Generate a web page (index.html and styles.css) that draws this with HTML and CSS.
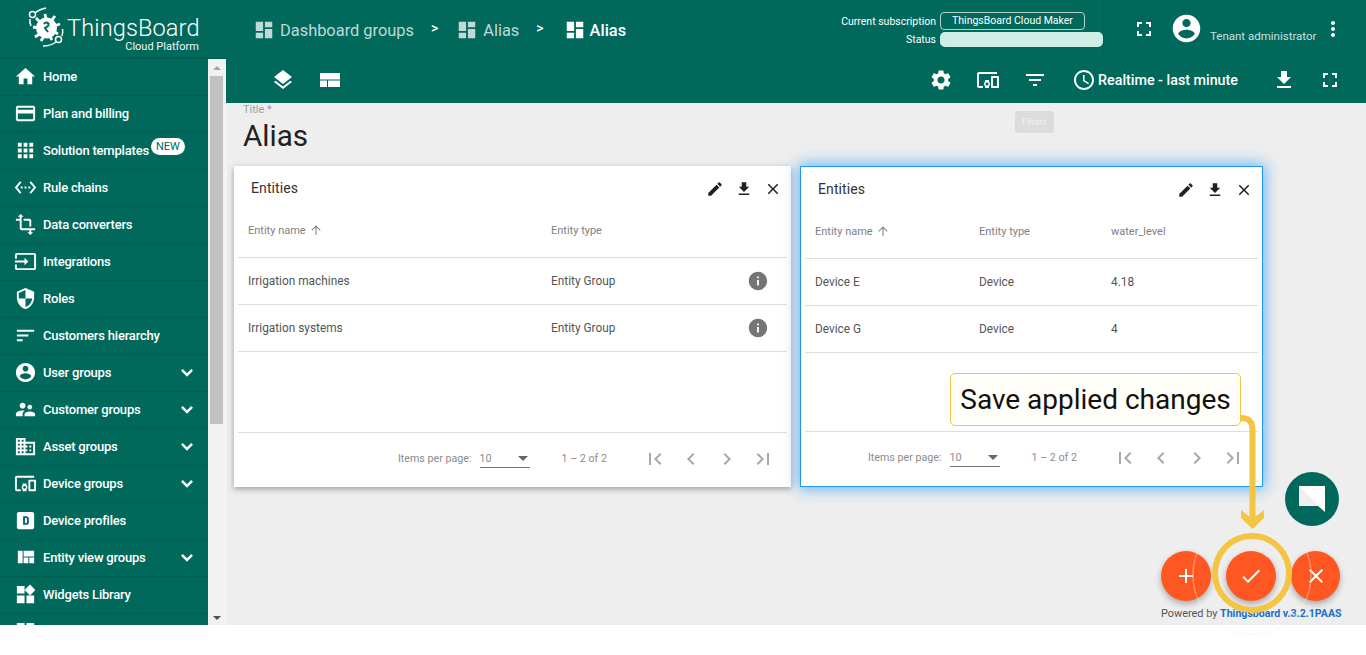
FILE: index.html
```html
<!DOCTYPE html>
<html lang="en">
<head>
<meta charset="utf-8">
<title>ThingsBoard - Alias</title>
<link rel="stylesheet" href="styles.css">
</head>
<body>
<svg class="defs" aria-hidden="true">
  <symbol id="i-home" viewBox="0 0 24 24"><path d="M10 20v-6h4v6h5v-8h3L12 3 2 12h3v8z"/></symbol>
  <symbol id="i-card" viewBox="0 0 24 24"><path d="M20 4H4c-1.11 0-1.99.89-1.99 2L2 18c0 1.11.89 2 2 2h16c1.11 0 2-.89 2-2V6c0-1.11-.89-2-2-2zm0 14H4v-6h16v6zm0-10H4V6h16v2z"/></symbol>
  <symbol id="i-apps" viewBox="0 0 24 24"><path d="M4 8h4V4H4v4zm6 12h4v-4h-4v4zm-6 0h4v-4H4v4zm0-6h4v-4H4v4zm6 0h4v-4h-4v4zm6-10v4h4V4h-4zm-6 4h4V4h-4v4zm6 6h4v-4h-4v4zm0 6h4v-4h-4v4z"/></symbol>
  <symbol id="i-rule" viewBox="0 0 24 24"><path d="M7.77 6.76L6.23 5.48.82 12l5.41 6.52 1.54-1.28L3.42 12l4.35-5.24zM7 13h2v-2H7v2zm10-2h-2v2h2v-2zm-6 2h2v-2h-2v2zm6.77-7.52l-1.54 1.28L20.58 12l-4.35 5.24 1.54 1.28L23.18 12l-5.41-6.52z"/></symbol>
  <symbol id="i-transform" viewBox="0 0 24 24"><path d="M22 18v-2H8V4h2L7 1 4 4h2v2H2v2h4v8c0 1.1.9 2 2 2h8v2h-2l3 3 3-3h-2v-2h4zM10 8h6v6h2V8c0-1.1-.9-2-2-2h-6v2z"/></symbol>
  <symbol id="i-input" viewBox="0 0 24 24"><path d="M21 3.01H3c-1.1 0-2 .9-2 2V9h2V4.99h18v14.03H3V15H1v4.01c0 1.1.9 1.98 2 1.98h18c1.1 0 2-.88 2-1.98v-14c0-1.11-.9-2-2-2zM11 16l4-4-4-4v3H1v2h10v3z"/></symbol>
  <symbol id="i-security" viewBox="0 0 24 24"><path d="M12 1L3 5v6c0 5.55 3.84 10.74 9 12 5.16-1.26 9-6.45 9-12V5l-9-4zm0 10.99h7c-.53 4.12-3.28 7.79-7 8.94V12H5V6.3l7-3.11v8.8z"/></symbol>
  <symbol id="i-sort" viewBox="0 0 24 24"><path d="M3 18h6v-2H3v2zM3 6v2h18V6H3zm0 7h12v-2H3v2z"/></symbol>
  <symbol id="i-account" viewBox="0 0 24 24"><path d="M12 2C6.48 2 2 6.48 2 12s4.48 10 10 10 10-4.48 10-10S17.52 2 12 2zm0 3c1.66 0 3 1.34 3 3s-1.34 3-3 3-3-1.34-3-3 1.34-3 3-3zm0 14.2c-2.5 0-4.71-1.28-6-3.22.03-1.99 4-3.08 6-3.08 1.99 0 5.97 1.09 6 3.08-1.29 1.94-3.5 3.22-6 3.22z"/></symbol>
  <symbol id="i-people" viewBox="0 0 24 24"><path d="M16.5 12c1.38 0 2.49-1.12 2.49-2.5S17.88 7 16.5 7C15.12 7 14 8.12 14 9.5s1.12 2.5 2.5 2.5zM9 11c1.66 0 2.99-1.34 2.99-3S10.66 5 9 5C7.34 5 6 6.34 6 8s1.34 3 3 3zm7.5 3c-1.83 0-5.5.92-5.5 2.75V19h11v-2.25c0-1.83-3.67-2.75-5.5-2.75zM9 13c-2.33 0-7 1.17-7 3.5V19h7v-2.25c0-.85.33-2.34 2.37-3.47C10.5 13.1 9.66 13 9 13z"/></symbol>
  <symbol id="i-domain" viewBox="0 0 24 24"><path d="M12 7V3H2v18h20V7H10zM6 19H4v-2h2v2zm0-4H4v-2h2v2zm0-4H4V9h2v2zm0-4H4V5h2v2zm4 12H8v-2h2v2zm0-4H8v-2h2v2zm0-4H8V9h2v2zm0-4H8V5h2v2zm10 12h-8v-2h2v-2h-2v-2h2v-2h-2V9h8v10zm-2-8h-2v2h2v-2zm0 4h-2v2h2v-2z"/></symbol>
  <symbol id="i-devices" viewBox="0 0 24 24"><path d="M3 6h18V4H3c-1.1 0-2 .9-2 2v12c0 1.1.9 2 2 2h4v-2H3V6zm10 6H9v1.78c-.61.55-1 1.33-1 2.22s.39 1.67 1 2.22V20h4v-1.78c.61-.55 1-1.34 1-2.22s-.39-1.67-1-2.22V12zm-2 5.5c-.83 0-1.5-.67-1.5-1.5s.67-1.5 1.5-1.5 1.5.67 1.5 1.5-.67 1.5-1.5 1.5zM22 8h-6c-.5 0-1 .5-1 1v10c0 .5.5 1 1 1h6c.5 0 1-.5 1-1V9c0-.5-.5-1-1-1zm-1 10h-4v-8h4v8z"/></symbol>
  <symbol id="i-profile" viewBox="0 0 24 24"><path fill-rule="evenodd" d="M5 3h14c1.1 0 2 .9 2 2v14c0 1.1-.9 2-2 2H5c-1.1 0-2-.9-2-2V5c0-1.1.9-2 2-2zm4.5 4.5v9H13c1.4 0 2.5-1.1 2.5-2.5V10c0-1.4-1.1-2.5-2.5-2.5H9.500zm2 2H13c.3 0 .5.2.5.5v4c0 .3-.2.5-.5.5h-1.500V9.500z"/></symbol>
  <symbol id="i-quilt" viewBox="0 0 24 24"><path d="M10 18h5v-6h-5v6zm-6 0h5V5H4v13zm12 0h5v-6h-5v6zM10 5v6h11V5H10z"/></symbol>
  <symbol id="i-widgets" viewBox="0 0 24 24"><path d="M13 13v8h8v-8h-8zM3 21h8v-8H3v8zM3 3v8h8V3H3zm13.66-1.31L11 7.34 16.66 13l5.66-5.66-5.66-5.65z"/></symbol>
  <symbol id="i-dashboard" viewBox="0 0 24 24"><path d="M3 13h8V3H3v10zm0 8h8v-6H3v6zm10 0h8V11h-8v10zm0-18v6h8V3h-8z"/></symbol>
  <symbol id="i-layers" viewBox="0 0 24 24"><path d="M11.99 18.54l-7.37-5.73L3 14.07l9 7 9-7-1.63-1.27-7.38 5.74zM12 16l7.36-5.73L21 9l-9-7-9 7 1.63 1.27L12 16z"/></symbol>
  <symbol id="i-layout" viewBox="0 0 24 24"><path d="M2 5h20v6.500H2zM2 12.500h7V19H2zM10 12.500h12V19H10z"/></symbol>
  <symbol id="i-settings" viewBox="0 0 24 24"><path d="M19.14 12.94c.04-.3.06-.61.06-.94 0-.32-.02-.64-.07-.94l2.03-1.58c.18-.14.23-.41.12-.61l-1.92-3.32c-.12-.22-.37-.29-.59-.22l-2.39.96c-.5-.38-1.03-.7-1.62-.94l-.36-2.54c-.04-.24-.24-.41-.48-.41h-3.84c-.24 0-.43.17-.47.41l-.36 2.54c-.59.24-1.13.57-1.62.94l-2.39-.96c-.22-.08-.47 0-.59.22L2.74 8.87c-.12.21-.08.47.12.61l2.03 1.58c-.05.3-.09.63-.09.94s.02.64.07.94l-2.03 1.58c-.18.14-.23.41-.12.61l1.92 3.32c.12.22.37.29.59.22l2.39-.96c.5.38 1.03.7 1.62.94l.36 2.54c.05.24.24.41.48.41h3.84c.24 0 .44-.17.47-.41l.36-2.54c.59-.24 1.13-.56 1.62-.94l2.39.96c.22.08.47 0 .59-.22l1.92-3.32c.12-.22.07-.47-.12-.61l-2.01-1.58zM12 15.600c-1.98 0-3.6-1.62-3.6-3.6s1.62-3.6 3.6-3.6 3.6 1.62 3.6 3.6-1.62 3.6-3.6 3.6z"/></symbol>
  <symbol id="i-filter" viewBox="0 0 24 24"><path d="M10 18h4v-2h-4v2zM3 6v2h18V6H3zm3 7h12v-2H6v2z"/></symbol>
  <symbol id="i-clock" viewBox="0 0 24 24"><path d="M11.99 2C6.47 2 2 6.48 2 12s4.47 10 9.990 10C17.52 22 22 17.52 22 12S17.52 2 11.99 2zM12 20c-4.420 0-8-3.580-8-8s3.580-8 8-8 8 3.580 8 8-3.580 8-8 8zm.5-13H11v6l5.250 3.150.75-1.230-4.500-2.670z"/></symbol>
  <symbol id="i-download" viewBox="0 0 24 24"><path d="M19 9h-4V3H9v6H5l7 7 7-7zM5 18v2h14v-2H5z"/></symbol>
  <symbol id="i-fullscreen" viewBox="0 0 24 24"><path d="M7 14H5v5h5v-2H7v-3zm-2-4h2V7h3V5H5v5zm12 7h-3v2h5v-5h-2v3zM14 5v2h3v3h2V5h-5z"/></symbol>
  <symbol id="i-more" viewBox="0 0 24 24"><path d="M12 8c1.100 0 2-.9 2-2s-.9-2-2-2-2 .9-2 2 .9 2 2 2zm0 2c-1.100 0-2 .9-2 2s.9 2 2 2 2-.9 2-2-.9-2-2-2zm0 6c-1.100 0-2 .9-2 2s.9 2 2 2 2-.9 2-2-.9-2-2-2z"/></symbol>
  <symbol id="i-edit" viewBox="0 0 24 24"><path d="M3 17.250V21h3.750L17.810 9.940l-3.750-3.750L3 17.250zM20.710 7.040c.39-.39.39-1.020 0-1.410l-2.340-2.340c-.39-.39-1.020-.39-1.410 0l-1.830 1.830 3.750 3.750 1.830-1.830z"/></symbol>
  <symbol id="i-close" viewBox="0 0 24 24"><path d="M19 6.410L17.590 5 12 10.590 6.410 5 5 6.410 10.590 12 5 17.590 6.410 19 12 13.410 17.590 19 19 17.590 13.410 12z"/></symbol>
  <symbol id="i-info" viewBox="0 0 24 24"><path d="M12 2C6.480 2 2 6.480 2 12s4.480 10 10 10 10-4.480 10-10S17.520 2 12 2zm1 15h-2v-6h2v6zm0-8h-2V7h2v2z"/></symbol>
  <symbol id="i-up" viewBox="0 0 24 24"><path d="M4 12l1.410 1.410L11 7.830V20h2V7.830l5.580 5.590L20 12l-8-8-8 8z"/></symbol>
  <symbol id="i-first" viewBox="0 0 24 24"><path d="M18.410 16.590L13.820 12l4.590-4.590L17 6l-6 6 6 6zM6 6h2v12H6z"/></symbol>
  <symbol id="i-prev" viewBox="0 0 24 24"><path d="M15.410 7.410L14 6l-6 6 6 6 1.410-1.410L10.830 12z"/></symbol>
  <symbol id="i-next" viewBox="0 0 24 24"><path d="M10 6L8.590 7.410 13.170 12l-4.580 4.590L10 18l6-6z"/></symbol>
  <symbol id="i-last" viewBox="0 0 24 24"><path d="M5.590 7.410L10.180 12l-4.590 4.590L7 18l6-6-6-6zM16 6h2v12h-2z"/></symbol>
  <symbol id="i-add" viewBox="0 0 24 24"><path d="M19 13h-6v6h-2v-6H5v-2h6V5h2v6h6v2z"/></symbol>
  <symbol id="i-check" viewBox="0 0 24 24"><path d="M9 16.170L4.830 12l-1.420 1.410L9 19 21 7l-1.410-1.410z"/></symbol>
  <symbol id="i-expand" viewBox="0 0 24 24"><path d="M16.590 7.590L12 12.170 7.410 7.590 5.500 9.500l6.500 6.500 6.500-6.500z"/></symbol>
</svg>

<div class="app">
  <aside class="side">
    <div class="brand">
      <svg class="brand-mark" viewBox="0 0 40 46" stroke="#fff">
        <g transform="translate(1 2)">
          <path d="M8 7 C11 4 15 3 19 2" stroke-width="1.500"/>
          <circle cx="5.500" cy="8.500" r="3" stroke-width="1.500"/>
          <path d="M3 13 C2.500 16 3 18 4 20" stroke-width="1.500"/>
          <path d="M29 36 C25 39 20 40 16 40" stroke-width="1.500"/>
          <circle cx="31.500" cy="33.500" r="3" stroke-width="1.500"/>
          <path d="M35 30 C36 27 36 25 35.500 23" stroke-width="1.500"/>
          <circle cx="19.500" cy="22" r="10.500" fill="#fff" stroke="none"/>
          <path d="M9 12 L14 17 M6 21 L12 22 M8 31 L14 27 M14 35 L17 30 M25 34 L22 29 M31 28 L26 25 M33 18 L27 20 M28 10 L24 15 M18 8 L19 13" stroke-width="2.800"/>
          <path d="M17 18 C19 15 23 17 21 20 L18 22 L21 26" stroke="#00695c" stroke-width="2"/>
        </g>
      </svg>
      <div class="brand-text">
        <div class="brand-name">ThingsBoard</div>
        <div class="brand-sub">Cloud Platform</div>
      </div>
    </div>
    <div class="side-body">
      <nav class="menu">
        <a class="menu-item"><svg class="menu-icon"><use href="#i-home"/></svg><span>Home</span></a>
        <a class="menu-item"><svg class="menu-icon"><use href="#i-card"/></svg><span>Plan and billing</span></a>
        <a class="menu-item"><svg class="menu-icon"><use href="#i-apps"/></svg><span>Solution templates</span><b class="badge">NEW</b></a>
        <a class="menu-item"><svg class="menu-icon"><use href="#i-rule"/></svg><span>Rule chains</span></a>
        <a class="menu-item"><svg class="menu-icon"><use href="#i-transform"/></svg><span>Data converters</span></a>
        <a class="menu-item"><svg class="menu-icon"><use href="#i-input"/></svg><span>Integrations</span></a>
        <a class="menu-item"><svg class="menu-icon"><use href="#i-security"/></svg><span>Roles</span></a>
        <a class="menu-item"><svg class="menu-icon"><use href="#i-sort"/></svg><span>Customers hierarchy</span></a>
        <a class="menu-item"><svg class="menu-icon"><use href="#i-account"/></svg><span>User groups</span><svg class="menu-chevron"><use href="#i-expand"/></svg></a>
        <a class="menu-item"><svg class="menu-icon"><use href="#i-people"/></svg><span>Customer groups</span><svg class="menu-chevron"><use href="#i-expand"/></svg></a>
        <a class="menu-item"><svg class="menu-icon"><use href="#i-domain"/></svg><span>Asset groups</span><svg class="menu-chevron"><use href="#i-expand"/></svg></a>
        <a class="menu-item"><svg class="menu-icon"><use href="#i-devices"/></svg><span>Device groups</span><svg class="menu-chevron"><use href="#i-expand"/></svg></a>
        <a class="menu-item"><svg class="menu-icon"><use href="#i-profile"/></svg><span>Device profiles</span></a>
        <a class="menu-item"><svg class="menu-icon"><use href="#i-quilt"/></svg><span>Entity view groups</span><svg class="menu-chevron"><use href="#i-expand"/></svg></a>
        <a class="menu-item"><svg class="menu-icon"><use href="#i-widgets"/></svg><span>Widgets Library</span></a>
        <a class="menu-item"><svg class="menu-icon"><use href="#i-dashboard"/></svg></a>
      </nav>
      <div class="scrollbar">
        <i class="scroll-up"></i>
        <div class="scroll-track"><div class="scroll-thumb"></div></div>
        <i class="scroll-down"></i>
      </div>
    </div>
  </aside>

  <main class="main">
    <header class="topbar">
      <div class="topbar-row">
        <div class="crumbs">
          <div class="crumb"><svg class="crumb-icon"><use href="#i-dashboard"/></svg><span>Dashboard groups</span></div>
          <span class="crumb-sep">&gt;</span>
          <div class="crumb"><svg class="crumb-icon"><use href="#i-dashboard"/></svg><span>Alias</span></div>
          <span class="crumb-sep">&gt;</span>
          <div class="crumb crumb-current"><svg class="crumb-icon"><use href="#i-dashboard"/></svg><span>Alias</span></div>
        </div>
        <div class="subscription">
          <span class="sub-label">Current subscription</span>
          <span class="sub-chip">ThingsBoard Cloud Maker</span>
          <span class="sub-label">Status</span>
          <span class="sub-status"></span>
        </div>
        <div class="user-area">
          <svg class="icon-24 user-full"><use href="#i-fullscreen"/></svg>
          <svg class="user-avatar"><use href="#i-account"/></svg>
          <span class="user-role">Tenant administrator</span>
          <svg class="icon-24 user-more"><use href="#i-more"/></svg>
        </div>
      </div>
      <div class="topbar-row tools">
        <svg class="icon-24 tool-layers"><use href="#i-layers"/></svg>
        <svg class="icon-24 tool-layout"><use href="#i-layout"/></svg>
        <div class="tools-right">
          <svg class="icon-24 tool"><use href="#i-settings"/></svg>
          <svg class="icon-24 tool"><use href="#i-devices"/></svg>
          <svg class="icon-24 tool"><use href="#i-filter"/></svg>
          <div class="timewindow"><svg class="icon-24"><use href="#i-clock"/></svg><span>Realtime - last minute</span></div>
          <svg class="icon-24 tool tool-dl"><use href="#i-download"/></svg>
          <svg class="icon-24 tool tool-fs"><use href="#i-fullscreen"/></svg>
        </div>
      </div>
    </header>

    <section class="content">
      <div class="title-field">
        <div class="title-label">Title *</div>
        <div class="title-value">Alias</div>
      </div>
      <div class="widgets">
        <article class="card">
          <div class="card-head">
            <h2>Entities</h2>
            <div class="card-actions">
              <svg class="icon-18"><use href="#i-edit"/></svg>
              <svg class="icon-18"><use href="#i-download"/></svg>
              <svg class="icon-18"><use href="#i-close"/></svg>
            </div>
          </div>
          <div class="table table-groups">
            <div class="row row-head"><span class="sort-col">Entity name <svg class="sort-icon"><use href="#i-up"/></svg></span><span>Entity type</span><span></span></div>
            <div class="row"><span>Irrigation machines</span><span>Entity Group</span><svg class="info-icon"><use href="#i-info"/></svg></div>
            <div class="row"><span>Irrigation systems</span><span>Entity Group</span><svg class="info-icon"><use href="#i-info"/></svg></div>
          </div>
          <div class="pager">
            <span>Items per page:</span>
            <span class="pager-select"><span>10</span><i class="pager-caret"></i></span>
            <span class="pager-range">1 – 2 of 2</span>
            <div class="pager-btns">
              <svg class="pager-btn"><use href="#i-first"/></svg>
              <svg class="pager-btn"><use href="#i-prev"/></svg>
              <svg class="pager-btn"><use href="#i-next"/></svg>
              <svg class="pager-btn"><use href="#i-last"/></svg>
            </div>
          </div>
        </article>

        <article class="card card-selected">
          <div class="card-head">
            <h2>Entities</h2>
            <div class="card-actions">
              <svg class="icon-18"><use href="#i-edit"/></svg>
              <svg class="icon-18"><use href="#i-download"/></svg>
              <svg class="icon-18"><use href="#i-close"/></svg>
            </div>
          </div>
          <div class="table table-devices">
            <div class="row row-head"><span class="sort-col">Entity name <svg class="sort-icon"><use href="#i-up"/></svg></span><span>Entity type</span><span>water_level</span></div>
            <div class="row"><span>Device E</span><span>Device</span><span>4.18</span></div>
            <div class="row"><span>Device G</span><span>Device</span><span>4</span></div>
          </div>
          <div class="pager">
            <span>Items per page:</span>
            <span class="pager-select"><span>10</span><i class="pager-caret"></i></span>
            <span class="pager-range">1 – 2 of 2</span>
            <div class="pager-btns">
              <svg class="pager-btn"><use href="#i-first"/></svg>
              <svg class="pager-btn"><use href="#i-prev"/></svg>
              <svg class="pager-btn"><use href="#i-next"/></svg>
              <svg class="pager-btn"><use href="#i-last"/></svg>
            </div>
          </div>
        </article>
      </div>
    </section>
  </main>
</div>

<div class="tooltip">Filters</div>

<div class="fab fab-add"><svg class="fab-icon"><use href="#i-add"/></svg></div>
<div class="fab fab-save"><svg class="fab-icon"><use href="#i-check"/></svg></div>
<div class="fab fab-cancel"><svg class="fab-icon"><use href="#i-close"/></svg></div>

<div class="chat">
  <svg viewBox="0 0 54 54"><path d="M14 14h26v26l-7-6H14z" fill="#fff"/><path d="M14 14 L34 34 H14z" fill="#f1eef0"/></svg>
</div>

<div class="powered">Powered by <b>Thingsboard v.3.2.1PAAS</b></div>

<svg class="annotation" viewBox="0 0 1366 655">
  <circle cx="1252" cy="575" r="59" stroke="#f6efd6" stroke-width="1.500" opacity=".35"/>
  <circle cx="1252" cy="573" r="37" stroke="#f4c542" stroke-width="6"/>
  <path d="M1241 418 C1249 418 1252.500 422 1252.500 430 L1252.500 524" stroke="#f4c542" stroke-width="6"/>
  <path d="M1241 510 L1252.500 519 L1264 510 L1264 518 L1252.500 529 L1241 518z" fill="#f4c542"/>
</svg>
<div class="callout">Save applied changes</div>
</body>
</html>
```

FILE: styles.css
```css
* { box-sizing: border-box; }
html, body { margin: 0; height: 655px; overflow: hidden; background: #fff; }
body { position: relative; font-family: Roboto, "Noto Sans", sans-serif; color: #212121; }
.defs { width: 0; height: 0; position: absolute; }
svg { fill: currentColor; flex: none; }

.app { display: flex; height: 625px; overflow: hidden; }
.side { width: 226px; flex: none; display: flex; flex-direction: column; background: #00695c; color: #fff; }
.brand { height: 59px; flex: none; display: flex; align-items: flex-start; padding: 3px 0 0 26px; border-bottom: 1px solid rgba(0,0,0,.12); }
.brand-mark { width: 40px; height: 46px; margin-top: 1px; fill: none; }
.brand-text { margin-left: 1px; width: 132px; padding-top: 12px; text-align: right; }
.brand-name { font-size: 23.600px; font-weight: 300; line-height: 26px; letter-spacing: .1px; white-space: nowrap; }
.brand-sub { font-size: 11px; line-height: 11px; opacity: .95; }

.side-body { flex: 1; min-height: 0; display: flex; }
.menu { width: 208px; flex: none; overflow: hidden; }
.menu-item { height: 37px; display: flex; align-items: center; border-bottom: 1px solid rgba(0,0,0,.1); padding: 0 0 1px 14px; font-size: 13px; font-weight: 500; white-space: nowrap; letter-spacing: -.2px; }
.menu-icon { width: 23px; height: 23px; margin-right: 6px; }
.menu-chevron { width: 22px; height: 22px; margin-left: auto; margin-right: 10px; }
.badge { margin: -9px 0 0 2px; height: 17px; line-height: 17px; padding: 0 5px; border-radius: 9px; background: #fff; color: #00695c; font-size: 11px; font-weight: 400; letter-spacing: 0; }

.scrollbar { width: 18px; flex: none; background: #f1f1f1; display: flex; flex-direction: column; align-items: center; border-right: 1px solid #fafafa; }
.scroll-up, .scroll-down { flex: none; width: 0; height: 0; border-left: 4px solid transparent; border-right: 4px solid transparent; }
.scroll-up { border-bottom: 4px solid #a3a3a3; margin: 7px 0 6px; }
.scroll-down { border-top: 4px solid #505050; margin: 6px 0 5px; }
.scroll-track { flex: 1; width: 100%; padding: 0 2px; }
.scroll-thumb { height: 348px; width: 13px; background: #c1c1c1; }

.main { flex: 1; min-width: 0; display: flex; flex-direction: column; background: #eee; }
.topbar { height: 103px; flex: none; background: #00695c; color: #fff; }
.topbar-row { display: flex; align-items: center; height: 58px; }
.crumbs { display: flex; align-items: center; padding: 2px 0 0 29px; width: 598px; flex: none; }
.crumb { display: flex; align-items: center; gap: 5px; font-size: 16.400px; color: rgba(255,255,255,.75); white-space: nowrap; }
.crumb-icon { width: 22px; height: 22px; margin-left: -2px; }
.crumb-current { color: #fff; font-weight: 500; gap: 4px; margin-left: 2px; }
.crumb-sep { font-size: 14px; font-weight: 500; margin: -5px 20px 0 17px; color: #fff; }

.subscription { display: grid; grid-template-columns: 112px auto; column-gap: 4px; row-gap: 2px; align-items: center; align-content: start; font-size: 10.500px; width: 280px; flex: none; align-self: flex-start; padding-top: 12px; height: 58px; border-right: 1px solid rgba(0,0,0,.05); }
.sub-label { text-align: right; white-space: nowrap; }
.sub-chip { height: 18px; width: 145px; border: 1px solid rgba(255,255,255,.7); border-radius: 4px; text-align: center; line-height: 16px; white-space: nowrap; }
.sub-status { height: 15px; width: 163px; border-radius: 5px; background: #cdede5; }

.user-area { flex: 1; display: flex; align-items: center; height: 58px; }
.icon-18 { width: 18px; height: 18px; }
.icon-24 { width: 24px; height: 24px; }
.user-full { margin-left: 28px; }
.user-avatar { width: 33px; height: 33px; margin: -2px 0 0 14px; }
.user-role { font-size: 11.500px; margin: 13px 0 0 7px; color: rgba(255,255,255,.8); white-space: nowrap; }
.user-more { margin-left: 5px; }

.tools { height: 45px; align-items: flex-start; padding-top: 10px; }
.tool-layers { margin-left: 45px; }
.tool-layout { margin-left: 23px; }
.tools-right { margin-left: auto; display: flex; align-items: center; padding-right: 24px; }
.tool { margin-left: 23px; }
.timewindow { display: flex; align-items: center; gap: 2px; margin-left: 25px; font-size: 14.300px; font-weight: 500; white-space: nowrap; }
.tool-dl { margin-left: 34px; }
.tool-fs { margin-left: 22px; }

.content { flex: 1; padding: 0 0 0 8px; }
.title-field { padding-left: 9px; height: 63px; }
.title-label { font-size: 11px; line-height: 12px; color: #9e9e9e; padding-top: 1px; }
.title-value { font-size: 29.600px; line-height: 35px; margin-top: 3px; color: #212121; }

.widgets { display: flex; gap: 9px; align-items: flex-start; }
.card { width: 557px; height: 321px; background: #fff; box-shadow: 0 2px 6px rgba(0,0,0,.35); display: flex; flex-direction: column; padding: 0 4px; }
.card-selected { width: 463px; border: 1px solid #2196f3; box-shadow: 0 0 14px 2px rgba(33,150,243,.65); }
.card-head { height: 45px; display: flex; align-items: center; justify-content: space-between; padding: 0 5px 0 13px; flex: none; }
.card-head h2 { margin: -2px 0 0; font-size: 14px; font-weight: 400; color: #333; letter-spacing: .1px; }
.card-actions { display: flex; gap: 11px; color: #212121; }
.table { flex: 1; min-height: 0; display: flex; flex-direction: column; border-bottom: 1px solid #ddd; }
.row { display: grid; height: 47px; align-items: center; padding-left: 10px; border-bottom: 1px solid #ddd; font-size: 11.850px; color: #555; flex: none; }
.row-head { font-size: 11px; color: #808080; padding-bottom: 8px; }
.table-groups .row { grid-template-columns: 303px 196px 22px; }
.table-devices .row { grid-template-columns: 164px 132px 1fr; }
.sort-col { display: flex; align-items: center; gap: 3px; }
.sort-icon { width: 14px; height: 14px; color: #888; }
.info-icon { width: 22px; height: 22px; color: #757575; }
.pager { height: 54px; flex: none; display: flex; align-items: center; justify-content: flex-end; font-size: 10.700px; color: #8c8c8c; padding: 0 12px 3px 0; }
.card-selected .pager { padding-right: 13px; }
.pager-select { width: 50px; height: 18px; margin-left: 8px; border-bottom: 1px solid #777; display: flex; align-items: center; justify-content: space-between; padding-right: 2px; }
.pager-caret { border-left: 5.500px solid transparent; border-right: 5.500px solid transparent; border-top: 5px solid #666; }
.pager-range { margin-left: 32px; margin-right: 36px; }
.pager-btns { display: flex; gap: 12px; color: #a8a8a8; }
.pager-btn { width: 24px; height: 24px; }

.tooltip { position: absolute; left: 1015px; top: 111px; width: 39px; height: 22px; border-radius: 3px; background: #dcdcdc; color: #f1f1f1; font-size: 9px; line-height: 22px; text-align: center; }

.fab { position: absolute; top: 551px; width: 50px; height: 50px; border-radius: 50%; background: #ff5722; color: #fff; display: flex; align-items: center; justify-content: center; box-shadow: 0 3px 6px rgba(0,0,0,.3); }
.fab-add { left: 1161px; }
.fab-save { left: 1226px; }
.fab-cancel { left: 1291px; width: 49px; }
.fab-icon { width: 24px; height: 24px; }

.chat { position: absolute; left: 1285px; top: 472px; width: 54px; height: 54px; border-radius: 50%; background: #00695c; }
.chat svg { display: block; width: 54px; height: 54px; }

.powered { position: absolute; left: 1161px; top: 607px; font-size: 10.900px; line-height: 13px; color: #555; white-space: nowrap; }
.powered b { color: #1a6fc9; font-size: 10.600px; font-weight: 700; }

.annotation { position: absolute; left: 0; top: 0; width: 1366px; height: 655px; pointer-events: none; fill: none; }
.callout { position: absolute; left: 950px; top: 373px; width: 291px; height: 53px; border: 1px solid #f4c542; border-radius: 5px; background: #fffef9; color: #111; font-size: 28px; line-height: 51px; text-align: center; white-space: nowrap; }
```
